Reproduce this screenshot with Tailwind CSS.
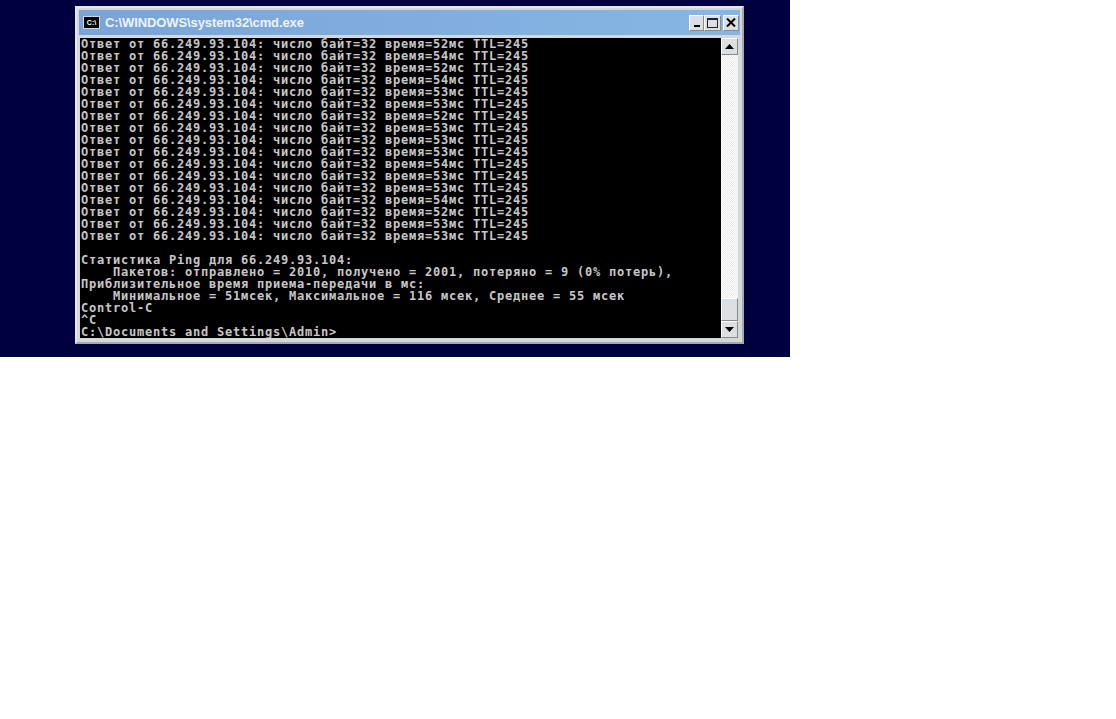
<!DOCTYPE html>
<html>
<head>
<meta charset="utf-8">
<script src="https://cdn.jsdelivr.net/npm/@tailwindcss/browser@4"></script>
</head>
<body class="bg-white">
<div class="w-[790px] h-[357px] bg-[#000040] pt-[6px] pl-[75px]">
  <div class="w-[669px] h-[338px] bg-[#d4d8dc] border-[2px] border-t-[#e8e8e8] border-l-[#e8e8e8] border-r-[#a8a8a8] border-b-[#a8a8a8] p-[2px] flex flex-col">
    <div class="h-[25px] bg-gradient-to-r from-[#7aa4d8] to-[#86b6e4] flex items-center pl-[4px] pr-[1px]">
      <div class="w-[17px] h-[13px] bg-black border border-[#c8d4e8] flex items-center justify-center">
        <span class="text-[7px] leading-none text-white font-bold font-['Liberation_Sans',sans-serif]">C:\</span>
      </div>
      <span class="ml-[5px] text-[#eef4ff] text-[13px] font-bold font-['Liberation_Sans',sans-serif] tracking-[-0.1px]">C:\WINDOWS\system32\cmd.exe</span>
      <div class="ml-auto flex items-center gap-0">
        <div class="w-[15px] h-[16px] bg-[#dcdfe2] border border-t-white border-l-white border-r-[#8a8a8a] border-b-[#8a8a8a] flex items-end justify-center pb-[3px]">
          <div class="w-[6px] h-[2px] bg-black"></div>
        </div>
        <div class="w-[17px] h-[16px] bg-[#dcdfe2] border border-t-white border-l-white border-r-[#8a8a8a] border-b-[#8a8a8a] flex items-center justify-center">
          <div class="w-[11px] h-[10px] border border-[#222] border-t-2"></div>
        </div>
        <div class="w-[16px] h-[16px] ml-[2px] bg-[#dcdfe2] border border-t-white border-l-white border-r-[#8a8a8a] border-b-[#8a8a8a] flex items-center justify-center">
          <svg width="10" height="9" viewBox="0 0 10 9"><path d="M1 0.5 L9 8.5 M9 0.5 L1 8.5" stroke="#000" stroke-width="2" fill="none"/></svg>
        </div>
      </div>
    </div>
    <div class="flex h-[300px] mt-[3px] ml-px">
      <pre class="w-[641px] h-[300px] bg-black text-[#c8c8c8] font-['DejaVu_Sans_Mono',monospace] text-[12px] tracking-[0.776px] leading-[12px] font-bold pl-px pt-0 overflow-hidden">Ответ от 66.249.93.104: число байт=32 время=52мс TTL=245
Ответ от 66.249.93.104: число байт=32 время=54мс TTL=245
Ответ от 66.249.93.104: число байт=32 время=52мс TTL=245
Ответ от 66.249.93.104: число байт=32 время=54мс TTL=245
Ответ от 66.249.93.104: число байт=32 время=53мс TTL=245
Ответ от 66.249.93.104: число байт=32 время=53мс TTL=245
Ответ от 66.249.93.104: число байт=32 время=52мс TTL=245
Ответ от 66.249.93.104: число байт=32 время=53мс TTL=245
Ответ от 66.249.93.104: число байт=32 время=53мс TTL=245
Ответ от 66.249.93.104: число байт=32 время=53мс TTL=245
Ответ от 66.249.93.104: число байт=32 время=54мс TTL=245
Ответ от 66.249.93.104: число байт=32 время=53мс TTL=245
Ответ от 66.249.93.104: число байт=32 время=53мс TTL=245
Ответ от 66.249.93.104: число байт=32 время=54мс TTL=245
Ответ от 66.249.93.104: число байт=32 время=52мс TTL=245
Ответ от 66.249.93.104: число байт=32 время=53мс TTL=245
Ответ от 66.249.93.104: число байт=32 время=53мс TTL=245

Статистика Ping для 66.249.93.104:
    Пакетов: отправлено = 2010, получено = 2001, потеряно = 9 (0% потерь),
Приблизительное время приема-передачи в мс:
    Минимальное = 51мсек, Максимальное = 116 мсек, Среднее = 55 мсек
Control-C
^C
C:\Documents and Settings\Admin&gt;</pre>
      <div class="w-[17px] h-[300px] flex flex-col bg-[repeating-conic-gradient(#ffffff_0_25%,#e8e8e8_0_50%)] bg-[length:2px_2px]">
        <div class="w-[17px] h-[17px] bg-[#dcdfe2] border border-t-white border-l-white border-r-[#8a8a8a] border-b-[#8a8a8a] flex items-center justify-center">
          <svg width="9" height="5" viewBox="0 0 9 5"><path d="M4.5 0 L9 5 L0 5 Z" fill="#000"/></svg>
        </div>
        <div class="mt-auto w-[17px] h-[23px] bg-[#dcdfe2] border border-t-white border-l-white border-r-[#8a8a8a] border-b-[#8a8a8a]"></div>
        <div class="w-[17px] h-[17px] bg-[#dcdfe2] border border-t-white border-l-white border-r-[#8a8a8a] border-b-[#8a8a8a] flex items-center justify-center">
          <svg width="9" height="5" viewBox="0 0 9 5"><path d="M0 0 L9 0 L4.5 5 Z" fill="#000"/></svg>
        </div>
      </div>
    </div>
  </div>
</div>
</body>
</html>
